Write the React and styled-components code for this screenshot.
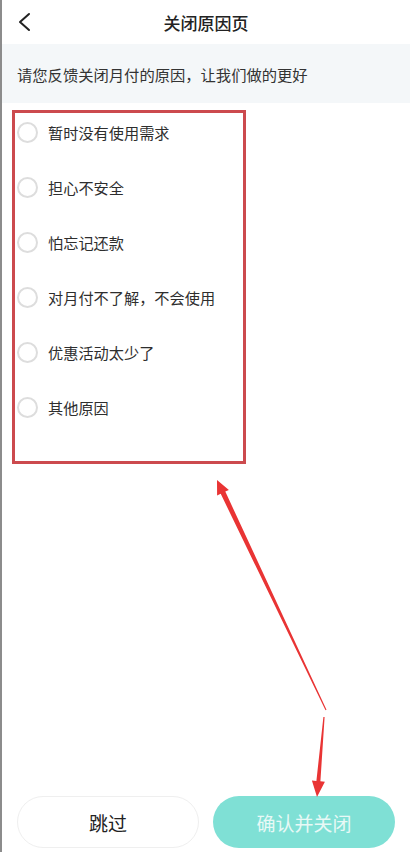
import React, { useState } from "react";
import styled, { createGlobalStyle } from "styled-components";

const reasons = [
  "暂时没有使用需求",
  "担心不安全",
  "怕忘记还款",
  "对月付不了解，不会使用",
  "优惠活动太少了",
  "其他原因",
];

const App = () => {
  const [picked, setPicked] = useState(null);

  return (
    <Page>
      <GlobalStyle />
      <Header>
        <BackButton aria-label="返回">
          <svg width="14" height="20" viewBox="0 0 14 20">
            <polyline
              points="12,2 3,10 12,18"
              fill="none"
              stroke="#222"
              strokeWidth="2"
              strokeLinecap="round"
              strokeLinejoin="round"
            />
          </svg>
        </BackButton>
        <Title>关闭原因页</Title>
        <span />
      </Header>

      <Banner>请您反馈关闭月付的原因，让我们做的更好</Banner>

      <ReasonBox>
        {reasons.map((reason, i) => (
          <ReasonRow key={reason} onClick={() => setPicked(i)}>
            <Radio $checked={picked === i} />
            <ReasonText>{reason}</ReasonText>
          </ReasonRow>
        ))}
      </ReasonBox>

      <Footer>
        <SkipButton>跳过</SkipButton>
        <ConfirmButton>确认并关闭</ConfirmButton>
      </Footer>

      {/* red annotation arrows drawn over the page */}
      <Annotation viewBox="0 0 410 852">
        <polygon points="217,480 228.9,489.9 225.3,491.6 326.5,709.8 325.5,710.2 220.7,493.8 217.1,495.5" />
        <polygon points="317,797 311.9,780.5 316.4,780.9 323.4,717 324.6,717 320.4,781.3 324.9,781.7" />
      </Annotation>
    </Page>
  );
};

export default App;

const GlobalStyle = createGlobalStyle`
  body {
    margin: 0;
    background: #fff;
    font-family: "Noto Sans CJK SC", "Noto Sans", sans-serif;
  }
  * {
    box-sizing: border-box;
  }
`;

const Page = styled.div`
  position: relative;
  width: 410px;
  height: 852px;
  display: flex;
  flex-direction: column;
  background: #fff;
  border-left: 2px solid #8c8c8c;
  overflow: hidden;
`;

const Header = styled.div`
  height: 44px;
  display: grid;
  grid-template-columns: 60px 1fr 60px;
  align-items: center;
`;

const BackButton = styled.button`
  border: none;
  background: none;
  padding: 0 0 0 15px;
  display: flex;
  align-items: center;
  height: 44px;
  cursor: pointer;
`;

const Title = styled.h1`
  margin: 0;
  text-align: center;
  font-size: 17px;
  font-weight: 500;
  color: #222;
`;

const Banner = styled.div`
  height: 59px;
  display: flex;
  align-items: center;
  padding-left: 15px;
  background: #f4f7f9;
  font-size: 15.3px;
  color: #333;
`;

const ReasonBox = styled.div`
  margin: 7px 0 0 10px;
  width: 234px;
  height: 354px;
  border: 3px solid #cc4a4e;
  display: flex;
  flex-direction: column;
  gap: 17px;
  padding: 0 0 0 2px;
`;

const ReasonRow = styled.label`
  height: 38px;
  display: flex;
  align-items: center;
  gap: 10px;
  cursor: pointer;
`;

const Radio = styled.span`
  width: 21px;
  height: 21px;
  border-radius: 50%;
  border: 2px solid ${(p) => (p.$checked ? "#7fe0d5" : "#dddddd")};
  background: ${(p) => (p.$checked ? "#7fe0d5" : "#fff")};
  flex-shrink: 0;
`;

const ReasonText = styled.span`
  font-size: 15.2px;
  color: #2e2e2e;
`;

const Footer = styled.div`
  margin-top: auto;
  display: flex;
  gap: 14px;
  padding: 0 15px 4px 15px;
`;

const SkipButton = styled.button`
  width: 182px;
  height: 52px;
  border-radius: 26px;
  border: 1px solid #efefef;
  background: #fff;
  font-family: inherit;
  font-size: 19px;
  color: #222;
`;

const ConfirmButton = styled.button`
  width: 182px;
  height: 52px;
  border-radius: 26px;
  border: none;
  background: #7fe0d5;
  font-family: inherit;
  font-size: 19px;
  color: #e8f9f6;
`;

const Annotation = styled.svg`
  position: absolute;
  left: -2px;
  top: 0;
  width: 410px;
  height: 852px;
  pointer-events: none;
  fill: #e93434;
`;
